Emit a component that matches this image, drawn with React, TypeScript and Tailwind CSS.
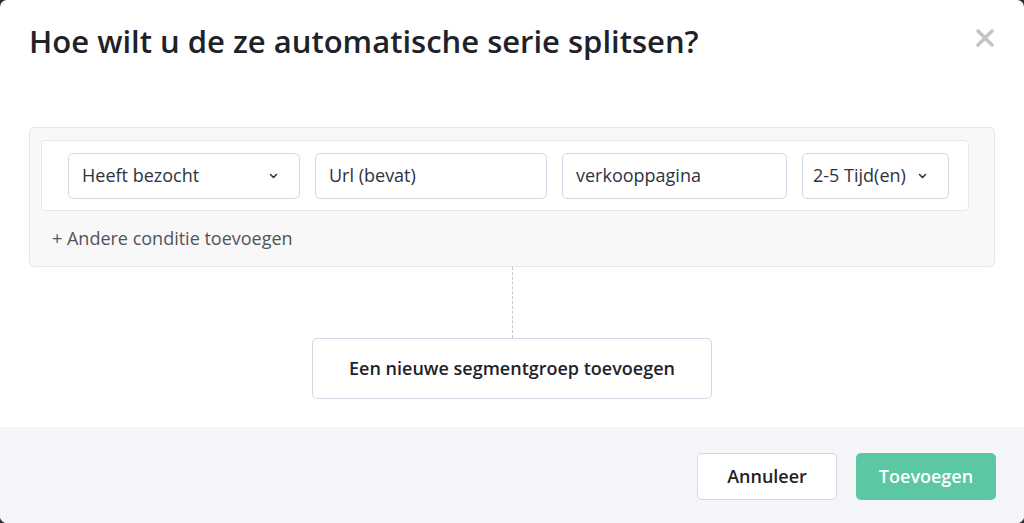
import React from "react";

const Chevron = () => (
  <svg width="9" height="6" viewBox="0 0 9 6" fill="none">
    <path d="M1.5 1.5L4.5 4.5L7.5 1.5" stroke="#2d3340" strokeWidth="1.6" strokeLinecap="round" strokeLinejoin="round" />
  </svg>
);

export default function App() {
  return (
    <div
      className="w-[1024px] h-[523px] bg-[#2a2a2a] overflow-hidden"
      style={{ fontFamily: '"Open Sans", "Noto Sans", sans-serif' }}
    >
      <div className="relative w-full h-full bg-white rounded-[7px] flex flex-col overflow-hidden">
        <button className="absolute right-[29px] top-[28px] w-[20px] h-[20px] flex items-center justify-center">
          <svg width="20" height="20" viewBox="0 0 20 20" fill="none">
            <path d="M3 3L17 17M17 3L3 17" stroke="#c4c4c4" strokeWidth="3.6" strokeLinecap="round" />
          </svg>
        </button>

        <div className="flex-1 px-[29px] pt-[22px]">
          <h1 className="text-[31px] leading-[38px] font-semibold text-[#1f2229]">
            Hoe wilt u de ze automatische serie splitsen?
          </h1>

          <div className="mt-[67px] h-[140px] rounded-[6px] border border-[#e6e6e6] bg-[#f8f8f8] pl-[11px] pr-[25px] pt-[12px]">
            <div className="h-[71px] rounded-[4px] border border-[#e7e7e7] bg-white flex items-center pl-[26px] gap-[15px]">
              <div className="w-[232px] h-[46px] rounded-[5px] border border-[#d4d8e6] bg-white flex items-center justify-between pl-[13px] pr-[21px]">
                <span className="text-[18px] text-[#2d3340]">Heeft bezocht</span>
                <Chevron />
              </div>
              <div className="w-[232px] h-[46px] rounded-[5px] border border-[#d4d8e6] bg-white flex items-center pl-[13px]">
                <span className="text-[18px] text-[#2d3340]">Url (bevat)</span>
              </div>
              <div className="w-[225px] h-[46px] rounded-[5px] border border-[#d4d8e6] bg-white flex items-center pl-[13px]">
                <span className="text-[18px] text-[#2d3340]">verkooppagina</span>
              </div>
              <div className="w-[147px] h-[46px] rounded-[5px] border border-[#d4d8e6] bg-white flex items-center gap-[12px] pl-[10px]">
                <span className="text-[18px] text-[#2d3340]">2-5 Tijd(en)</span>
                <Chevron />
              </div>
            </div>
            <div className="mt-[14px] pl-[11px] text-[18px] leading-[26px] text-[#4f545c]">
              + Andere conditie toevoegen
            </div>
          </div>

          <div className="flex flex-col items-center">
            <div className="h-[71px] border-l border-dashed border-[#c8c8c8]" />
            <button className="w-[400px] h-[61px] rounded-[5px] border border-[#d4d8e6] bg-white text-[18px] font-semibold text-[#1f2229]">
              Een nieuwe segmentgroep toevoegen
            </button>
          </div>
        </div>

        <div className="h-[96px] bg-[#f5f6fa] flex items-start justify-end gap-[19px] pr-[28px] pt-[26px]">
          <button className="w-[140px] h-[47px] rounded-[5px] border border-[#d4d8e6] bg-white text-[18px] font-semibold text-[#1f2229]">
            Annuleer
          </button>
          <button className="w-[140px] h-[47px] rounded-[5px] bg-[#5cc8a3] text-[18px] font-semibold text-white">
            Toevoegen
          </button>
        </div>
      </div>
    </div>
  );
}
